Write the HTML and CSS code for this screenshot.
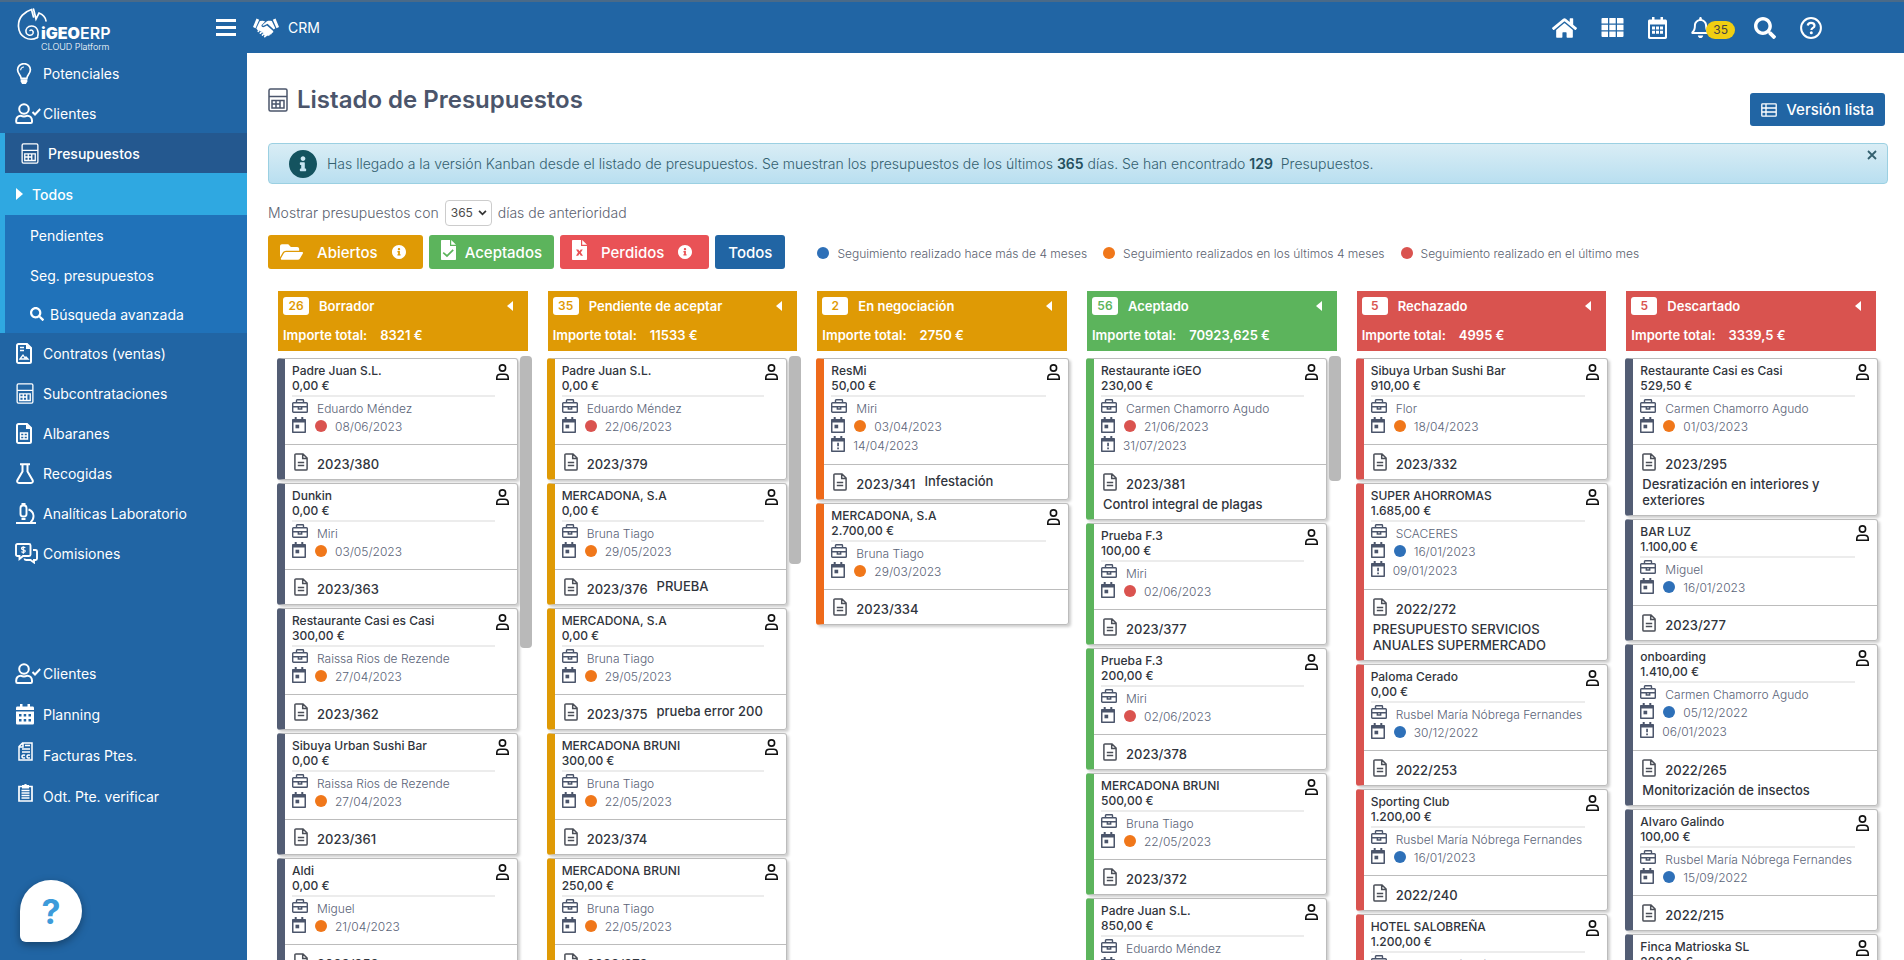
FILE: index.html
```
<!DOCTYPE html>
<html lang="es">
<head>
<meta charset="utf-8">
<title>Listado de Presupuestos</title>
<link rel="stylesheet" href="styles.css">
</head>
<body>
<svg class="sprite" aria-hidden="true">
  <symbol id="i-calc" viewBox="0 0 20 24"><g fill="none" stroke="currentColor" stroke-width="1.5"><rect x="1" y="1" width="18" height="22" rx="1.5"/><path d="M1 8.5h18M4 12.5h12v7.5H4zM8 12.5V20M12 12.5V20M4 16h8"/></g></symbol>
  <symbol id="i-bulb" viewBox="0 0 16 22"><path d="M5 16c0-3-3.700-4.500-3.700-8.800A6.700 6.500 0 0 1 14.700 7.200C14.700 11.500 11 13 11 16z" fill="none" stroke="currentColor" stroke-width="1.800"/><path d="M4.500 7.500A3.300 3.300 0 0 1 8 4.200" fill="none" stroke="currentColor" stroke-width="1.200"/><path d="M4.500 17h7v2.500L10 22H6l-1.500-2.500z" fill="currentColor"/></symbol>
  <symbol id="i-usercheck" viewBox="0 0 26 21"><g fill="none" stroke="currentColor" stroke-width="2"><circle cx="9" cy="6" r="4.800"/><path d="M1.200 17.500c0-3 2-4.800 4.500-4.800 1.500.7 5 .7 6.600 0 2.500 0 4.700 1.800 4.700 4.800v1.300c0 .7-.4 1.200-1.200 1.200H2.400c-.8 0-1.200-.5-1.200-1.200zM17.500 9l2.500 2.500L25.200 6"/></g></symbol>
  <symbol id="i-contract" viewBox="0 0 16 21"><path d="M1 2.500C1 1.600 1.600 1 2.500 1H11l4 4v13.500c0 .9-.6 1.500-1.500 1.500h-11C1.600 20 1 19.400 1 18.500z" fill="none" stroke="currentColor" stroke-width="2"/><path d="M4 4.500h4M4 7.500h4M4 16l3-4 2 3 1-1 2 2z" fill="none" stroke="currentColor" stroke-width="1.300"/><path d="M10 1v5h5z" fill="currentColor"/></symbol>
  <symbol id="i-sheet" viewBox="0 0 16 21"><path d="M1 2.500C1 1.600 1.600 1 2.500 1H11l4 4v13.500c0 .9-.6 1.500-1.500 1.500h-11C1.600 20 1 19.400 1 18.500z" fill="none" stroke="currentColor" stroke-width="2"/><path d="M10 1v5h5z" fill="currentColor"/><path d="M4.500 10h7v6h-7zM8 10v6M4.500 13h7" fill="none" stroke="currentColor" stroke-width="1.400"/></symbol>
  <symbol id="i-flask" viewBox="0 0 18 21"><path d="M4 1.200h10M6.500 1.500v7L1.500 17c-.8 1.600 0 3 1.500 3h12c1.500 0 2.300-1.400 1.500-3l-5-8.500v-7" fill="none" stroke="currentColor" stroke-width="2"/></symbol>
  <symbol id="i-scope" viewBox="0 0 20 21"><g fill="none" stroke="currentColor" stroke-width="1.900"><rect x="4.500" y="2.500" width="6" height="11" rx="2.500"/><path d="M5.500 1h4M5.500 16h4M12.500 6.500c6 2 6.500 9 2 13M0 20h20"/></g></symbol>
  <symbol id="i-comm" viewBox="0 0 23 21"><g fill="none" stroke="currentColor" stroke-width="1.900"><path d="M2.500 1h11.500c1 0 1.500.5 1.500 1.500v9c0 1-.5 1.500-1.500 1.500H8l-3.500 3v-3h-2C1.500 13 1 12.500 1 11.500v-9C1 1.500 1.500 1 2.500 1z"/><path d="M18 7h2.500c1 0 1.500.5 1.500 1.500v7c0 1-.5 1.500-1.500 1.500H19v2.500L15.500 17H11c-1 0-1.500-.5-1.500-1.500"/><path d="M10.300 4.800c-1-1-3.800-.9-3.800.7 0 1.700 3.800.9 3.800 2.600 0 1.600-2.800 1.700-3.900.6M8.300 3.200v7.500" stroke-width="1.200"/></g></symbol>
  <symbol id="i-cal" viewBox="0 0 18 21"><path fill-rule="evenodd" fill="currentColor" d="M4 0h2.500v2.500h5V0H14v2.500h2.500c1 0 1.500.7 1.500 1.500v2H0V4c0-.8.500-1.500 1.500-1.500H4zM0 7.500h18V19c0 1-.6 1.500-1.500 1.500h-15C.6 20.500 0 20 0 19zM3 10v2.400h2.500V10zm4.700 0v2.400h2.500V10zm4.800 0v2.400H15V10zM3 15v2.400h2.500V15zm4.700 0v2.400h2.500V15zm4.800 0v2.400H15V15z"/></symbol>
  <symbol id="i-invoice" viewBox="0 0 15 19"><path d="M4.500 1H14v17H1V4.500zM5 1v4H1M7 3.500h5M4 7h8M4 10h8" fill="none" stroke="currentColor" stroke-width="1.500"/><path d="M7 13.300c-2-.8-3 .2-3 1.300s1 2 3 1.200M12 13.300c-2-.8-3 .2-3 1.300s1 2 3 1.200" fill="none" stroke="currentColor" stroke-width="1.500"/></symbol>
  <symbol id="i-clip" viewBox="0 0 15 19"><path d="M1 3.500h13V18H1z" fill="none" stroke="currentColor" stroke-width="1.700"/><path d="M4 2h2a1.600 1.600 0 0 1 3 0h2v3.500H4z" fill="currentColor"/><path d="M3.500 7.500h8M3.500 10h8M3.500 12.500h8M3.500 15h8" stroke="currentColor" stroke-width="1.300"/></symbol>
  <symbol id="i-search" viewBox="0 0 512 512"><path fill="currentColor" d="M505 442.700L405.300 343c-4.500-4.500-10.600-7-17-7H372c27.600-35.300 44-79.700 44-128C416 93.100 322.900 0 208 0S0 93.100 0 208s93.100 208 208 208c48.300 0 92.700-16.400 128-44v16.300c0 6.400 2.500 12.500 7 17l99.700 99.700c9.400 9.400 24.600 9.400 33.900 0l28.300-28.300c9.400-9.400 9.400-24.600.1-34zM208 336c-70.700 0-128-57.200-128-128 0-70.700 57.200-128 128-128 70.700 0 128 57.200 128 128 0 70.700-57.200 128-128 128z"/></symbol>
  <symbol id="i-info" viewBox="8 8 496 496"><path fill="currentColor" d="M256 8C119.043 8 8 119.083 8 256c0 136.997 111.043 248 248 248s248-111.003 248-248C504 119.083 392.957 8 256 8zm0 110c23.196 0 42 18.804 42 42s-18.804 42-42 42-42-18.804-42-42 18.804-42 42-42zm56 254c0 6.627-5.373 12-12 12h-88c-6.627 0-12-5.373-12-12v-24c0-6.627 5.373-12 12-12h12v-64h-12c-6.627 0-12-5.373-12-12v-24c0-6.627 5.373-12 12-12h64c6.627 0 12 5.373 12 12v100h12c6.627 0 12 5.373 12 12v24z"/></symbol>
  <symbol id="i-folder" viewBox="0 64 576 384"><path fill="currentColor" d="M572.694 292.093L500.270 416.248A63.997 63.997 0 0 1 444.989 448H45.025c-18.523 0-30.064-20.093-20.731-36.093l72.424-124.155A64 64 0 0 1 152 256h399.964c18.523 0 30.064 20.093 20.730 36.093zM152 224h328v-48c0-26.510-21.490-48-48-48H272l-64-64H48C21.490 64 0 85.490 0 112v278.046l69.077-118.418C86.214 242.250 117.989 224 152 224z"/></symbol>
  <symbol id="i-home" viewBox="0 32 576 448"><path fill="currentColor" d="M280.370 148.260L96 300.110V464a16 16 0 0 0 16 16l112.060-.29a16 16 0 0 0 15.920-16V368a16 16 0 0 1 16-16h64a16 16 0 0 1 16 16v95.640a16 16 0 0 0 16 16.050L464 480a16 16 0 0 0 16-16V300L295.670 148.260a12.190 12.190 0 0 0-15.300 0zM571.600 251.470L488 182.560V44.050a12 12 0 0 0-12-12h-56a12 12 0 0 0-12 12v72.610L318.470 43a48 48 0 0 0-61 0L4.340 251.470a12 12 0 0 0-1.600 16.900l25.500 31A12 12 0 0 0 45.150 301l235.220-193.740a12.190 12.190 0 0 1 15.300 0L530.900 301a12 12 0 0 0 16.900-1.600l25.500-31a12 12 0 0 0-1.700-16.930z"/></symbol>
  <symbol id="i-grid" viewBox="0 0 22 19"><path fill="currentColor" d="M0 1a1 1 0 0 1 1-1h5.500v5.500H0zM7.800 0h6.400v5.500H7.800zM15.500 0H21a1 1 0 0 1 1 1v4.500h-6.500zM0 6.700h6.500v5.600H0zM7.800 6.700h6.400v5.600H7.800zM15.500 6.700H22v5.600h-6.500zM0 13.500h6.500V19H1a1 1 0 0 1-1-1zM7.800 13.500h6.400V19H7.800zM15.500 13.500H22V18a1 1 0 0 1-1 1h-5.500z"/></symbol>
  <symbol id="i-calout" viewBox="0 0 19 22"><path fill-rule="evenodd" fill="currentColor" d="M4 0h2.500v2.500h6V0H15v2.500h2.300c1 0 1.700.7 1.700 1.700v16c0 1-.7 1.700-1.700 1.700H1.700C.7 21.900 0 21.200 0 20.200v-16c0-1 .7-1.700 1.700-1.700H4zM2 7.500v11.800c0 .4.200.6.600.6h13.800c.4 0 .6-.2.600-.6V7.500z"/><path fill="currentColor" d="M4 9.500h3v3H4zM8 9.500h3v3H8zM12 9.500h3v3h-3zM4 13.700h3v3H4zM8 13.700h3v3H8zM12 13.700h3v3h-3z"/></symbol>
  <symbol id="i-bell" viewBox="0 0 448 512"><path fill="currentColor" d="M439.390 362.290c-19.320-20.760-55.470-51.990-55.470-154.290 0-77.700-54.480-139.900-127.940-155.160V32c0-17.670-14.320-32-31.980-32s-31.980 14.330-31.980 32v20.840C118.560 68.100 64.080 130.300 64.080 208c0 102.300-36.150 133.530-55.470 154.290-6 6.450-8.660 14.160-8.610 21.710.11 16.400 12.980 32 32.100 32h383.800c19.120 0 32-15.600 32.100-32 .05-7.550-2.610-15.270-8.610-21.710zM67.530 368c21.220-27.970 44.420-74.330 44.530-159.420 0-.2-.06-.38-.06-.58 0-61.860 50.140-112 112-112s112 50.140 112 112c0 .2-.06.38-.06.58.11 85.100 23.310 131.460 44.530 159.420H67.530zM224 512c35.320 0 63.970-28.650 63.970-64H160.030c0 35.350 28.650 64 63.970 64z"/></symbol>
  <symbol id="i-help" viewBox="0 0 22 22"><circle cx="11" cy="11" r="9.900" fill="none" stroke="currentColor" stroke-width="2"/><path d="M7.700 8.500C8 6.600 9.300 5.800 11 5.800c2 0 3.500 1.200 3.500 2.900 0 2.300-3.100 2.200-3.100 4.300" fill="none" stroke="currentColor" stroke-width="2.200"/><circle cx="11.300" cy="15.800" r="1.500" fill="currentColor"/></symbol>
  <symbol id="i-hands" viewBox="0 0 26 20"><path fill="currentColor" d="M3.500 .5L0 9l2.500 1.200L6.200 1.700zM22.500 .5L26 9l-2.500 1.200-3.700-8.500zM6.900 3l2.800-.3 2.500.8L8.600 7c-.6 1.600 1.300 2.900 3 1.800l2.300-1.400 6 5.300c.9 1 .2 2.300-1 2.200.1 1.200-1 2-2 1.500-.1 1.200-1.400 1.700-2.300 1-.4 1-1.800 1.200-2.600.5l-1-.9c.4-1.300-.6-2.300-1.700-2.100 0-1.200-1-2-2.100-1.700-.2-1.100-1.500-1.600-2.500-.9l-1.400-1.700zM13.300 3.700c1.300-1.100 2.500-1.200 5.500-.7l3.500 7.300-1.500 1.200-6.300-5.700-3.900 2c-1 .3-1.300-.5-.8-1z"/><g fill="none" stroke="currentColor" stroke-width="1.700" stroke-linecap="round"><path d="M5.300 13.300l.7-.8M7.300 15.200l.9-1M9.500 17l.9-1M11.700 18.700l.6-.7"/></g></symbol>
  <symbol id="i-list" viewBox="0 0 16 14"><path d="M.8 1.500c0-.5.300-.7.700-.7h13c.4 0 .7.200.7.700v11c0 .5-.3.700-.7.700h-13c-.4 0-.7-.2-.7-.7zM.8 5h14.400M.8 9h14.400M5 1v12" fill="none" stroke="currentColor" stroke-width="1.300"/></symbol>
  <symbol id="i-fcheck" viewBox="0 0 15 20"><path fill="currentColor" fill-rule="evenodd" d="M0 1c0-.6.400-1 1-1h8v6h6v13c0 .6-.4 1-1 1H1c-.6 0-1-.4-1-1zm2.700 11l-1 1.200L6 17.200l6.800-6.800-1.200-1.200L6 14.700z"/><path fill="currentColor" d="M10.200 0L15 4.800h-4.800z"/></symbol>
  <symbol id="i-fx" viewBox="0 0 15 20"><path fill="currentColor" fill-rule="evenodd" d="M0 1c0-.6.400-1 1-1h8v6h6v13c0 .6-.4 1-1 1H1c-.6 0-1-.4-1-1zM4 9.500l2 3-2 3.200h2.200l1.300-2 1.300 2H11l-2.200-3.200 2-3H8.700l-1.200 1.800-1.200-1.800z"/><path fill="currentColor" d="M10.200 0L15 4.800h-4.800z"/></symbol>
  <symbol id="i-user" viewBox="0 0 13 16"><g fill="none" stroke="currentColor" stroke-width="1.600"><circle cx="6.500" cy="4" r="3.100"/><path d="M.8 15.200v-1.400c0-2.200 1.700-3.600 3.700-3.600h4c2 0 3.700 1.400 3.700 3.600v1.400z"/></g></symbol>
  <symbol id="i-case" viewBox="0 0 16 14"><path d="M1.500 3.700h13c.4 0 .8.300.8.800v8c0 .5-.4.800-.8.800h-13c-.4 0-.8-.3-.8-.8v-8c0-.5.400-.8.800-.8zM4.500 3.500V1.400c0-.4.200-.7.700-.7h5.600c.5 0 .7.300.7.700v2.100M.8 7.700h14.400M6.300 8v2h3.400V8" fill="none" stroke="currentColor" stroke-width="1.400"/></symbol>
  <symbol id="i-day" viewBox="0 0 14 16"><path fill="currentColor" fill-rule="evenodd" d="M2.700 0h2v2h4.600V0h2v2H13c.6 0 1 .4 1 1v12c0 .6-.4 1-1 1H1c-.6 0-1-.4-1-1V3c0-.6.400-1 1-1h1.700zM1.500 5.500v9h11v-9z"/><path fill="currentColor" d="M3.500 7.700h3.700v3.600H3.500z"/></symbol>
  <symbol id="i-due" viewBox="0 0 14 16"><path fill="currentColor" fill-rule="evenodd" d="M2.700 0h2v2h4.600V0h2v2H13c.6 0 1 .4 1 1v12c0 .6-.4 1-1 1H1c-.6 0-1-.4-1-1V3c0-.6.400-1 1-1h1.700zM1.500 5.500v9h11v-9z"/><path fill="currentColor" d="M6.200 6.700h1.700v3.600H6.200zM6.200 11.500h1.700v1.700H6.200z"/></symbol>
  <symbol id="i-doc" viewBox="0 0 14 18"><path d="M.9 2C.9 1.300 1.300.9 2 .9h7l4.100 4.200V16c0 .7-.4 1.100-1.100 1.100H2c-.7 0-1.100-.4-1.100-1.100zM8.700 1v4.500H13M3.800 9.500h6.400M3.800 12.500h6.400" fill="none" stroke="currentColor" stroke-width="1.500"/></symbol>
</svg>

<header class="topbar">
  <a class="logo" href="#" aria-label="iGEO ERP">
    <svg class="gecko" viewBox="0 0 32 34" aria-hidden="true"><g fill="none" stroke="#fff" stroke-linecap="round"><path d="M20.500 29.500C12 34 2 29 1.500 18.500 1 9 8 3.500 14.500 1.500l2 7.500M16.500 1l2.500 10 3-6c4 1.500 6.500 4.500 7 8" stroke-width="1.700"/><path d="M20.500 29.500c2-6-.5-11.500-6-11.500-4 0-6 3-5.500 6 .5 3.500 5.500 4.500 7 1.500 1-2.500-1.500-4.500-3-3" stroke-width="1.500"/></g></svg>
    <span class="brand"><span class="brand-name"><b>iGEO</b>ERP</span><span class="brand-sub">CLOUD Platform</span></span>
  </a>
  <button class="icon-btn burger" type="button" aria-label="Menú"><span></span><span></span><span></span></button>
  <a class="module" href="#"><svg class="hands"><use href="#i-hands"/></svg>CRM</a>
  <nav class="tools" aria-label="Herramientas">
    <a href="#" aria-label="Inicio"><svg class="t-home"><use href="#i-home"/></svg></a>
    <a href="#" aria-label="Aplicaciones"><svg class="t-grid"><use href="#i-grid"/></svg></a>
    <a href="#" aria-label="Calendario"><svg class="t-cal"><use href="#i-calout"/></svg></a>
    <a class="alerts" href="#" aria-label="Avisos"><svg class="t-bell"><use href="#i-bell"/></svg><span class="count">35</span></a>
    <a href="#" aria-label="Buscar"><svg class="t-search"><use href="#i-search"/></svg></a>
    <a href="#" aria-label="Ayuda"><svg class="t-help"><use href="#i-help"/></svg></a>
  </nav>
</header>

<div class="shell">
  <nav class="sidebar" aria-label="Principal">
    <ul class="menu">
      <li><a href="#"><span class="ico"><svg class="w16 h21"><use href="#i-bulb"/></svg></span>Potenciales</a></li>
      <li><a href="#"><span class="ico wide"><svg class="w26 h21"><use href="#i-usercheck"/></svg></span>Clientes</a></li>
      <li class="active">
        <a href="#"><span class="ico"><svg class="w18 h21"><use href="#i-calc"/></svg></span>Presupuestos</a>
        <ul class="submenu">
          <li class="current"><a href="#"><span class="caret"></span>Todos</a></li>
          <li><a href="#">Pendientes</a></li>
          <li><a href="#">Seg. presupuestos</a></li>
          <li><a href="#"><svg class="sub-search"><use href="#i-search"/></svg>Búsqueda avanzada</a></li>
        </ul>
      </li>
      <li><a href="#"><span class="ico"><svg class="w16 h21"><use href="#i-contract"/></svg></span>Contratos (ventas)</a></li>
      <li><a href="#"><span class="ico"><svg class="w18 h21"><use href="#i-calc"/></svg></span>Subcontrataciones</a></li>
      <li><a href="#"><span class="ico"><svg class="w16 h21"><use href="#i-sheet"/></svg></span>Albaranes</a></li>
      <li><a href="#"><span class="ico"><svg class="w18 h21"><use href="#i-flask"/></svg></span>Recogidas</a></li>
      <li><a href="#"><span class="ico"><svg class="w20 h21"><use href="#i-scope"/></svg></span>Analíticas Laboratorio</a></li>
      <li><a href="#"><span class="ico wide"><svg class="w23 h21"><use href="#i-comm"/></svg></span>Comisiones</a></li>
    </ul>
    <ul class="menu shortcuts">
      <li><a href="#"><span class="ico wide"><svg class="w26 h21"><use href="#i-usercheck"/></svg></span>Clientes</a></li>
      <li><a href="#"><span class="ico"><svg class="w18 h21"><use href="#i-cal"/></svg></span>Planning</a></li>
      <li><a href="#"><span class="ico raised"><svg class="w15 h19"><use href="#i-invoice"/></svg></span>Facturas Ptes.</a></li>
      <li><a href="#"><span class="ico raised"><svg class="w15 h19"><use href="#i-clip"/></svg></span>Odt. Pte. verificar</a></li>
    </ul>
    <button class="help-bubble" type="button" aria-label="Ayuda">?</button>
  </nav>

  <main class="content">
    <div class="page-head">
      <h1><svg class="h-icon"><use href="#i-calc"/></svg>Listado de Presupuestos</h1>
      <a class="btn blue list-btn" href="#"><svg class="b-list"><use href="#i-list"/></svg>Versión lista</a>
    </div>
    <div class="notice" role="status">
      <svg class="n-info"><use href="#i-info"/></svg>
      <p>Has llegado a la versión Kanban desde el listado de presupuestos. Se muestran los presupuestos de los últimos <b>365</b> días. Se han encontrado <b>129</b>&nbsp; Presupuestos.</p>
      <button class="close" type="button" aria-label="Cerrar"><svg viewBox="0 0 10 10"><path d="M1 1l8 8M9 1L1 9" fill="none" stroke="currentColor" stroke-width="1.800"/></svg></button>
    </div>
    <div class="range">
      <label for="days">Mostrar presupuestos con</label>
      <span class="select-box"><select id="days"><option>365</option></select><svg viewBox="0 0 10 7" aria-hidden="true"><path d="M1 1l4 4 4-4" fill="none" stroke="#333" stroke-width="2"/></svg></span>
      <span>días de anterioridad</span>
    </div>
    <div class="filters">
      <button class="btn amber" type="button"><svg class="b-folder"><use href="#i-folder"/></svg><span>Abiertos</span><svg class="b-info"><use href="#i-info"/></svg></button>
      <button class="btn green" type="button"><svg class="b-file"><use href="#i-fcheck"/></svg><span>Aceptados</span></button>
      <button class="btn red" type="button"><svg class="b-file"><use href="#i-fx"/></svg><span>Perdidos</span><svg class="b-info"><use href="#i-info"/></svg></button>
      <button class="btn blue all" type="button">Todos</button>
      <ul class="legend">
        <li><i class="dot old"></i>Seguimiento realizado hace más de 4 meses</li>
        <li><i class="dot mid"></i>Seguimiento realizados en los últimos 4 meses</li>
        <li><i class="dot new"></i>Seguimiento realizado en el último mes</li>
      </ul>
    </div>
    <div class="board" id="board"></div>
  </main>
</div>
<script src="board.js"></script>
</body>
</html>
```
FILE: styles.css
```
* { box-sizing: border-box; }
html, body { height: 100%; }
body {
  margin: 0;
  height: 100vh;
  display: flex;
  flex-direction: column;
  overflow: hidden;
  background: #fff;
  font-family: Inter, "Liberation Sans", sans-serif;
  font-size: 14px;
  color: #4b556b;
}
ul { margin: 0; padding: 0; list-style: none; }
a { color: inherit; text-decoration: none; }
button { font: inherit; border: 0; padding: 0; cursor: pointer; }
svg { display: block; flex: none; }
.sprite { display: none; }

/* Top bar */
.topbar {
  flex: none;
  display: flex;
  align-items: center;
  height: 53px;
  background: #2165a4;
  border-top: 2px solid #4a6a88;
  color: #fff;
}
.logo { display: flex; width: 216px; height: 48px; padding: 4px 0 0 17px; }
.gecko { width: 32px; height: 34px; }
.brand { display: flex; flex-direction: column; margin: 16px 0 0 -8px; }
.brand-name { font-size: 16px; line-height: 18px; font-weight: 600; }
.brand-name b { font-weight: 900; }
.brand-sub { font-size: 9px; line-height: 10px; font-weight: 300; }
.icon-btn { background: none; color: inherit; }
.burger { display: flex; flex-direction: column; gap: 4px; width: 20px; }
.burger span { height: 3px; background: #fff; }
.module { display: flex; align-items: center; gap: 9px; margin-left: 17px; font-size: 14px; }
.hands { width: 26px; height: 20px; }
.tools { display: flex; align-items: center; gap: 24px; margin-left: auto; padding-right: 82px; }
.alerts { display: flex; align-items: center; }
.count {
  margin: 4px -5px 0 -4px;
  padding: 0 7px;
  border-radius: 9px;
  background: #f0ce12;
  color: #444;
  font-size: 12px;
  line-height: 18px;
}
.t-home { width: 25px; height: 20px; }
.t-grid { width: 23px; height: 19px; }
.t-cal { width: 19px; height: 22px; }
.t-bell { width: 19px; height: 21px; }
.t-search { width: 22px; height: 22px; }
.t-help { width: 22px; height: 22px; }

.shell { flex: 1; display: flex; min-height: 0; }

/* Sidebar */
.sidebar { position: relative; flex: none; width: 247px; background: #2165a4; color: #fff; font-size: 14px; }
.menu a { display: flex; align-items: center; height: 40px; }
.ico { flex: none; display: flex; width: 43px; padding-left: 16px; }
.ico.wide { padding-left: 15px; }
.ico.raised { padding: 0 0 8px 18px; }
.w15 { width: 15px; } .w16 { width: 16px; } .w18 { width: 18px; } .w20 { width: 20px; } .w23 { width: 23px; } .w26 { width: 26px; }
.h19 { height: 19px; } .h21 { height: 21px; }
.active { border-left: 5px solid #2fa8e1; background: #24588f; font-weight: 500; }
.submenu { background: #2072b9; font-weight: 400; }
.submenu a { padding-left: 25px; }
.submenu .current { margin-left: -5px; background: #2fa8e1; font-weight: 500; }
.submenu .current a { height: 42px; padding-left: 16px; }
.submenu li:last-child a { height: 38px; }
.caret { width: 0; margin-right: 9px; border: solid transparent; border-width: 6px 0 6px 7px; border-left-color: #fff; }
.sub-search { width: 14px; height: 14px; margin-right: 6px; }
.shortcuts { margin-top: 80px; }
.shortcuts a { height: 41px; }
.help-bubble {
  position: absolute;
  left: 20px;
  bottom: 18px;
  width: 62px;
  height: 62px;
  border-radius: 31px 31px 31px 6px;
  background: #fff;
  color: #3d9bda;
  font-size: 34px;
  font-weight: 700;
  box-shadow: 0 3px 8px rgba(0, 0, 0, .35);
}

/* Content */
.content { flex: 1; min-width: 0; display: flex; flex-direction: column; padding: 0 16px 0 21px; overflow: hidden; }
.page-head { display: flex; justify-content: space-between; align-items: flex-start; height: 90px; padding-right: 3px; }
h1 { display: flex; align-items: center; gap: 9px; margin: 32px 0 0; font-size: 24px; line-height: 30px; font-weight: 600; }
.h-icon { width: 20px; height: 24px; }
.btn {
  display: flex;
  align-items: center;
  height: 34px;
  border-radius: 3px;
  color: #fff;
  font-size: 15px;
  font-weight: 500;
}
.blue { background: #2165a4; }
.amber { background: #df9a05; }
.green { background: #5cb45c; }
.red { background: #e95256; }
.list-btn { margin-top: 40px; padding: 0 11px; gap: 9px; height: 33px; }
.b-list { width: 16px; height: 14px; }

.notice {
  flex: none;
  display: flex;
  align-items: center;
  height: 41px;
  padding-left: 20px;
  border: 1px solid #9bd0e2;
  border-radius: 4px;
  background: linear-gradient(#d9edf5, #b9dff0);
  color: #33606f;
}
.notice p { margin: 0 auto 0 10px; font-weight: 300; }
.notice b { font-weight: 600; color: #24505f; }
.n-info { width: 28px; height: 28px; color: #14535f; }
.close { align-self: flex-start; margin: 6px 10px 0 0; background: none; color: #33606f; }
.close svg { width: 10px; height: 10px; }

.range { flex: none; display: flex; align-items: center; gap: 6px; height: 27px; margin-top: 15px; font-weight: 300; color: #5b6270; }
.select-box { position: relative; }
.select-box select {
  display: block;
  width: 47px;
  height: 26px;
  padding: 0 0 0 5px;
  appearance: none;
  border: 1px solid #ccc;
  border-radius: 4px;
  background: #fff;
  color: #4b4b4b;
  font: 12px Inter, sans-serif;
}
.select-box svg { position: absolute; right: 5px; top: 10px; width: 9px; height: 6px; pointer-events: none; }

.filters { flex: none; display: flex; align-items: center; gap: 6px; margin-top: 9px; }
.amber { padding: 0 17px 0 12px; }
.amber span { margin: 0 14px; }
.green { padding: 0 12px; gap: 9px; }
.filters .red { padding: 0 17px 0 12px; }
.filters .red span { margin: 0 14px; }
.all { padding: 0 13px; }
.b-folder { width: 23px; height: 16px; }
.b-file { width: 15px; height: 20px; margin-bottom: 4px; }
.b-info { width: 14px; height: 14px; }
.legend { display: flex; gap: 16px; margin: 2px 0 0 26px; font-size: 12px; font-weight: 300; color: #5b6270; }
.legend li { display: flex; align-items: center; gap: 8px; }
.dot { flex: none; width: 12px; height: 12px; border-radius: 6px; }
.dot.old { background: #2e70b8; }
.dot.mid { background: #f0771a; }
.dot.new { background: #da534f; }

/* Board */
.board { flex: 1; min-height: 0; display: grid; grid-template-columns: repeat(6, minmax(0, 1fr)); margin: 22px 2px 0 0; overflow: hidden; }
.column { min-width: 0; padding: 0 10px; }
.col-head { height: 60px; padding: 6px 5px; color: #fff; font-size: 13px; font-weight: 600; }
.col-title { display: flex; align-items: center; height: 18px; }
.badge { width: 26px; margin-right: 10px; border-radius: 3px; background: #fff; font-size: 12px; line-height: 18px; text-align: center; }
.arrow { width: 0; margin: 0 10px 0 auto; padding: 0; border: solid transparent; border-width: 5px 6px 5px 0; border-right-color: #fff; background: none; }
.total { display: flex; gap: 13px; margin-top: 11px; line-height: 18px; }
.head-open { background: #df9a05; } .head-open .badge { color: #df9a05; }
.head-won { background: #5cb45c; } .head-won .badge { color: #5cb45c; }
.head-lost { background: #d9534f; } .head-lost .badge { color: #d9534f; }

.col-body { display: flex; align-items: flex-start; margin: 5px -4px 0 -2px; }
.cards { flex: 1; min-width: 0; display: flex; flex-direction: column; gap: 3px; padding: 2px 2px 0 1px; }
.thumb { flex: none; width: 12px; border-radius: 4px; background: #b9b9b9; }
.card {
  border: 1px solid #bcbcbc;
  border-left: 8px solid;
  border-radius: 3px;
  box-shadow: 2px 2px 3px rgba(0, 0, 0, .2);
}
.slate .card { border-left-color: #535d74; }
.gold .card { border-left-color: #df9a05; }
.orange .card { border-left-color: #ee6a1a; }
.lime .card { border-left-color: #5cb45c; }
.crimson .card { border-left-color: #d9534f; }
.card-top { position: relative; padding: 4px 22px 9px 7px; }
.client, .amount { margin: 0; overflow: hidden; color: #30343c; font-size: 12px; line-height: 15px; font-weight: 500; white-space: nowrap; }
.amount { padding-bottom: 2px; border-bottom: 2px solid #ececec; }
.who { position: absolute; right: 8px; top: 5px; background: none; color: #111; }
.who svg { width: 13px; height: 16px; }
.meta { display: flex; align-items: center; height: 18px; color: #5a6377; font-size: 12px; font-weight: 300; white-space: nowrap; }
.meta svg { color: #4b556b; }
.seller { margin: 2px -20px 0 0; gap: 9px; height: 18px; }
.m-case { width: 16px; height: 14px; margin-bottom: 4px; }
.m-day { width: 14px; height: 16px; margin-bottom: 2px; }
.meta .dot { margin: 0 8px 0 9px; }
.due { height: 20px; gap: 8px; }
.card-foot { border-top: 1px solid #bcbcbc; padding: 8px 30px 6px 9px; color: #30343c; font-size: 13px; font-weight: 500; }
.ref { display: flex; gap: 9px; height: 20px; line-height: 22px; white-space: nowrap; }
.f-doc { width: 14px; height: 18px; color: #4b4f58; }
.ref .note { line-height: 16px; }
.desc { margin: 3px 0 1px; line-height: 16px; }
```
FILE: board.js
```
const columns = [
  { name: 'Borrador', count: 26, total: '8321 €', head: 'open', tone: 'slate', thumb: 292, cards: [
    ['Padre Juan S.L.', '0,00 €', 'Eduardo Méndez', 'new', '08/06/2023', '', '2023/380'],
    ['Dunkin', '0,00 €', 'Miri', 'mid', '03/05/2023', '', '2023/363'],
    ['Restaurante Casi es Casi', '300,00 €', 'Raissa Rios de Rezende', 'mid', '27/04/2023', '', '2023/362'],
    ['Sibuya Urban Sushi Bar', '0,00 €', 'Raissa Rios de Rezende', 'mid', '27/04/2023', '', '2023/361'],
    ['Aldi', '0,00 €', 'Miguel', 'mid', '21/04/2023', '', '2023/358']] },
  { name: 'Pendiente de aceptar', count: 35, total: '11533 €', head: 'open', tone: 'gold', thumb: 208, cards: [
    ['Padre Juan S.L.', '0,00 €', 'Eduardo Méndez', 'new', '22/06/2023', '', '2023/379'],
    ['MERCADONA, S.A', '0,00 €', 'Bruna Tiago', 'mid', '29/05/2023', '', '2023/376', 'PRUEBA'],
    ['MERCADONA, S.A', '0,00 €', 'Bruna Tiago', 'mid', '29/05/2023', '', '2023/375', 'prueba error 200'],
    ['MERCADONA BRUNI', '300,00 €', 'Bruna Tiago', 'mid', '22/05/2023', '', '2023/374'],
    ['MERCADONA BRUNI', '250,00 €', 'Bruna Tiago', 'mid', '22/05/2023', '', '2023/373']] },
  { name: 'En negociación', count: 2, total: '2750 €', head: 'open', tone: 'orange', cards: [
    ['ResMi', '50,00 €', 'Miri', 'mid', '03/04/2023', '14/04/2023', '2023/341', 'Infestación'],
    ['MERCADONA, S.A', '2.700,00 €', 'Bruna Tiago', 'mid', '29/03/2023', '', '2023/334']] },
  { name: 'Aceptado', count: 56, total: '70923,625 €', head: 'won', tone: 'lime', thumb: 125, cards: [
    ['Restaurante iGEO', '230,00 €', 'Carmen Chamorro Agudo', 'new', '21/06/2023', '31/07/2023', '2023/381', '', 'Control integral de plagas'],
    ['Prueba F.3', '100,00 €', 'Miri', 'new', '02/06/2023', '', '2023/377'],
    ['Prueba F.3', '200,00 €', 'Miri', 'new', '02/06/2023', '', '2023/378'],
    ['MERCADONA BRUNI', '500,00 €', 'Bruna Tiago', 'mid', '22/05/2023', '', '2023/372'],
    ['Padre Juan S.L.', '850,00 €', 'Eduardo Méndez', 'mid', '22/05/2023', '', '2023/371']] },
  { name: 'Rechazado', count: 5, total: '4995 €', head: 'lost', tone: 'crimson', cards: [
    ['Sibuya Urban Sushi Bar', '910,00 €', 'Flor', 'mid', '18/04/2023', '', '2023/332'],
    ['SUPER AHORROMAS', '1.685,00 €', 'SCACERES', 'old', '16/01/2023', '09/01/2023', '2022/272', '', 'PRESUPUESTO SERVICIOS ANUALES SUPERMERCADO'],
    ['Paloma Cerado', '0,00 €', 'Rusbel María Nóbrega Fernandes', 'old', '30/12/2022', '', '2022/253'],
    ['Sporting Club', '1.200,00 €', 'Rusbel María Nóbrega Fernandes', 'old', '16/01/2023', '', '2022/240'],
    ['HOTEL SALOBREÑA', '1.200,00 €', 'Rusbel María Nóbrega Fernandes', 'old', '16/01/2023', '', '2022/239']] },
  { name: 'Descartado', count: 5, total: '3339,5 €', head: 'lost', tone: 'slate', cards: [
    ['Restaurante Casi es Casi', '529,50 €', 'Carmen Chamorro Agudo', 'mid', '01/03/2023', '', '2023/295', '', 'Desratización en interiores y exteriores'],
    ['BAR LUZ', '1.100,00 €', 'Miguel', 'old', '16/01/2023', '', '2023/277'],
    ['onboarding', '1.410,00 €', 'Carmen Chamorro Agudo', 'old', '05/12/2022', '06/01/2023', '2022/265', '', 'Monitorización de insectos'],
    ['Alvaro Galindo', '100,00 €', 'Rusbel María Nóbrega Fernandes', 'old', '15/09/2022', '', '2022/215'],
    ['Finca Matrioska SL', '200,00 €', 'Miguel', 'old', '15/09/2022', '', '2022/214']] }
];

const icon = (id, cls) => `<svg class="${cls}" aria-hidden="true"><use href="#i-${id}"/></svg>`;

const card = ([client, amount, seller, state, date, due, ref, note, desc]) => `
  <article class="card">
    <div class="card-top">
      <p class="client">${client}</p>
      <p class="amount">${amount}</p>
      <button class="who" type="button" aria-label="Contacto">${icon('user', '')}</button>
      <div class="meta seller">${icon('case', 'm-case')}<span>${seller}</span></div>
      <div class="meta">${icon('day', 'm-day')}<i class="dot ${state}"></i><span>${date}</span></div>
      ${due ? `<div class="meta due">${icon('due', 'm-day')}<span>${due}</span></div>` : ''}
    </div>
    <div class="card-foot">
      <div class="ref">${icon('doc', 'f-doc')}<span>${ref}</span>${note ? `<span class="note">${note}</span>` : ''}</div>
      ${desc ? `<p class="desc">${desc}</p>` : ''}
    </div>
  </article>`;

document.getElementById('board').innerHTML = columns.map(c => `
  <section class="column ${c.tone}">
    <div class="col-head head-${c.head}">
      <div class="col-title"><span class="badge">${c.count}</span><span>${c.name}</span><button class="arrow" type="button" aria-label="Plegar"></button></div>
      <div class="total"><span>Importe total:</span><span>${c.total}</span></div>
    </div>
    <div class="col-body">
      <div class="cards">${c.cards.map(card).join('')}</div>
      ${c.thumb ? `<div class="thumb" style="height:${c.thumb}px"></div>` : ''}
    </div>
  </section>`).join('');
```
